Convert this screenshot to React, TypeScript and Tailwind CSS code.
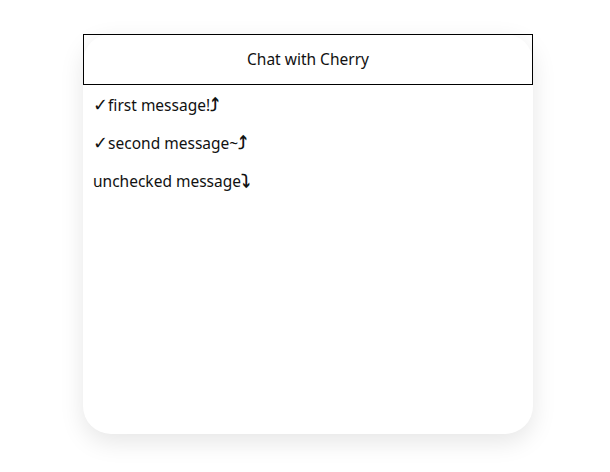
const messages = [
  { text: 'first message!', checked: true, up: true },
  { text: 'second message~', checked: true, up: true },
  { text: 'unchecked message', checked: false, up: false },
];

const symbolFont = { fontFamily: '"DejaVu Sans", sans-serif' };

export default function App() {
  return (
    <div className="min-h-[472px] bg-white pl-[83px] pt-[34px]" style={{ fontFamily: '"Noto Sans", "DejaVu Sans", sans-serif' }}>
      <div className="w-[450px] h-[400px] bg-white rounded-[28px] shadow-[0_8px_24px_rgba(0,0,0,0.1)]">
        <div className="h-[51px] border border-black flex items-center justify-center text-[15.5px] text-[#111]">
          Chat with Cherry
        </div>
        <div className="px-[10px] pt-[8px] flex flex-col gap-[14px]">
          {messages.map((m) => (
            <div key={m.text} className="h-[24px] flex items-center text-[15.5px] text-[#111] leading-6">
              {m.checked && <span className="font-bold text-[18px] leading-6" style={symbolFont}>✓</span>}
              <span>{m.text}</span>
              <span className="font-bold text-[18px] leading-6" style={symbolFont}>{m.up ? '⤴' : '⤵'}</span>
            </div>
          ))}
        </div>
      </div>
    </div>
  );
}
